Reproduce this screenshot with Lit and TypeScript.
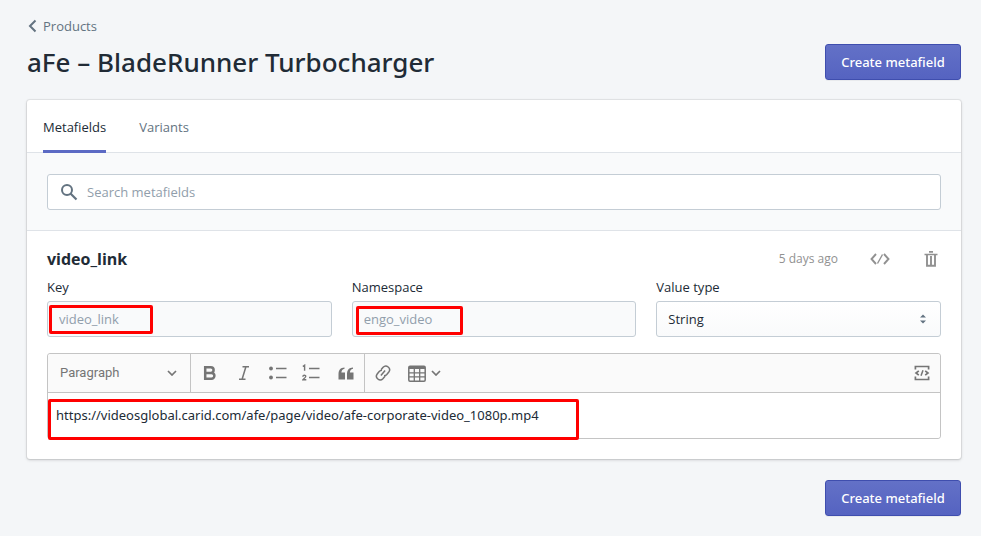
import { LitElement, html, css, svg } from "lit";
import { customElement } from "lit/decorators.js";

const sv = (w: number, h: number, body: unknown) =>
  html`<svg width=${w} height=${h} viewBox="0 0 ${w} ${h}" fill="none" aria-hidden="true">${body}</svg>`;

const icons = {
  back: sv(9, 14, svg`<path d="M7.5 1.5 2 7l5.500 5.500" stroke="#637381" stroke-width="2"/>`),
  search: sv(18, 18, svg`<circle cx="7" cy="7" r="5" stroke="#637381" stroke-width="2"/><path d="m10.500 10.500 6 6" stroke="#637381" stroke-width="2.200"/>`),
  code: sv(20, 14, svg`<path d="M6 2 1.500 7 6 12M14 2l4.500 5L14 12" stroke="#919191" stroke-width="1.900"/><path d="M12.500 2.500 7.500 11.500" stroke="#919191" stroke-width="1.400"/>`),
  trash: sv(14, 16, svg`<path d="M5 .8h4M.5 3.500h13" stroke="#919191" stroke-width="1.700"/><path d="M3 3.500V14.800h8V3.500M7 5v9.500" stroke="#919191" stroke-width="1.900"/>`),
  chevron: sv(10, 6, svg`<path d="m1 1 4 4 4-4" stroke="#757575" stroke-width="1.700"/>`),
  sort: sv(6, 10, svg`<path d="M0 3.500 3 .5l3 3zM0 6.500l3 3 3-3z" fill="#637381"/>`),
  bold: sv(14, 14, svg`<path d="M2.200 1.300h5.600a2.800 2.800 0 0 1 0 5.600H2.200zM2.200 6.900h6.300a2.900 2.900 0 0 1 0 5.800H2.200z" stroke="#757575" stroke-width="2.500"/>`),
  italic: sv(12, 16, svg`<path d="M4.500 1.700H11M1 14.300h6.500M7.900 1.700 4.100 14.300" stroke="#757575" stroke-width="1.500"/>`),
  bullets: sv(18, 14, svg`<circle cx="2" cy="2.500" r="1.900" fill="#757575"/><circle cx="2" cy="11.500" r="1.900" fill="#757575"/><path d="M7 2.500h10.500M7 11.500h10.500" stroke="#757575" stroke-width="1.500"/>`),
  numbers: sv(20, 18, svg`<path d="M.8 2.500 2.600 1.200V6.800M.8 12.700c.2-2 3.100-1.900 2.900-.2-.1 1-1.500 1.900-2.700 3.200h3.300" stroke="#757575" stroke-width="1.400"/><path d="M7 4.500h10.500M7 13.500h10.500" stroke="#757575" stroke-width="1.500"/>`),
  quote: sv(16, 13, svg`<path d="M6.500.5v1.300C4.500 2.200 3.500 3.600 3.400 5.500H7v7H.5V7C.5 3 2.500.7 6.500.5zM15 .5v1.300c-2 .4-3 1.800-3.100 3.700h3.600v7H9V7C9 3 11 .7 15 .5z" fill="#757575"/>`),
  link: sv(16, 18, svg`<path d="M6 5.800 8.100 3.300a3.700 3.700 0 0 1 5.700 4.700l-2 2.500a3.700 3.700 0 0 1-2.800 1.300M10 12.200l-2.100 2.500A3.700 3.700 0 0 1 2.200 10l2-2.500A3.700 3.700 0 0 1 7 6.200M5.900 11.400l4.200-4.900" stroke="#757575" stroke-width="1.500"/>`),
  table: sv(18, 17, svg`<rect x=".8" y="1.300" width="16.400" height="14.900" rx="1.200" stroke="#757575" stroke-width="1.500"/><path d="M1 2.500h16" stroke="#757575" stroke-width="3"/><path d="M1 7.800h16M1 11.800h16M6.300 3v13M11.700 3v13" stroke="#757575" stroke-width="1.300"/>`),
  source: sv(16, 16, svg`<path d="M1.400 4.500V1.500h13.200v3M1.400 11.500v3h13.200v-3" stroke="#757575" stroke-width="1.700"/><path d="M4.800 5.800 2 8l2.800 2.200M11.200 5.800 14 8l-2.800 2.200" stroke="#757575" stroke-width="1.700"/><path d="M9 5.300 7 10.700" stroke="#757575" stroke-width="1.500"/>`),
};

@customElement("app-root")
export class AppRoot extends LitElement {
  static styles = css`
    * { box-sizing: border-box; }
    :host {
      display: block;
      padding: 16px 20px 20px 27px;
      background: #f4f6f8;
      color: #212b36;
      font: 400 13px/20px "Open Sans", "Noto Sans", sans-serif;
    }
    svg { display: block; flex: none; }
    button, input, select, textarea { font: inherit; color: inherit; margin: 0; }
    button { border: 0; background: none; padding: 0; cursor: pointer; }
    .back {
      display: inline-flex; align-items: center; gap: 6px;
      padding-left: 1px; color: #637381; text-decoration: none; vertical-align: top;
    }
    .heading { display: flex; justify-content: space-between; align-items: center; margin-top: 8px; }
    h1 { margin: 0; font-family: "Noto Sans", sans-serif; font-size: 26px; line-height: 36px; font-weight: 500; }
    .primary {
      height: 36px; width: 136px; color: #fff; font-family: "Noto Sans", sans-serif; font-weight: 500;
      border: 1px solid #3f4eae; border-radius: 3px;
      background: linear-gradient(#6371c7, #5563c1);
      box-shadow: 0 1px 0 rgba(22, 29, 37, 0.05);
    }
    .card {
      margin: 20px 0 21px; background: #fff; border-radius: 3px;
      box-shadow: 0 0 0 1px rgba(63, 63, 68, 0.08), 0 1px 3px rgba(63, 63, 68, 0.25);
    }
    .tabs { display: flex; gap: 33px; padding: 0 16px; border-bottom: 1px solid #dfe3e8; }
    .tab { height: 53px; margin-bottom: -1px; color: #637381; border-bottom: 3px solid transparent; padding-top: 3px; }
    .tab.on { color: #212b36; border-color: #5c6ac4; }
    .filter { padding: 21px 20px 20px; background: #f9fafb; border-bottom: 1px solid #dfe3e8; }
    .search {
      display: flex; align-items: center; gap: 9px; height: 36px; padding: 0 12px;
      background: #fff; border: 1px solid #c4cdd5; border-radius: 3px;
    }
    .search input { flex: 1; min-width: 0; border: 0; padding: 0; outline: 0; background: none; }
    .search input::placeholder { color: #919eab; opacity: 1; }
    .entry { padding: 16px 20px 20px; }
    .top { display: flex; align-items: center; height: 24px; }
    h2 { flex: 1; margin: 0; font-size: 16px; line-height: 24px; font-weight: 700; }
    time { font-size: 12px; color: #919191; margin-right: 32px; }
    .top .trash { margin: 0 3px 0 34px; }
    .fields { display: grid; grid-template-columns: repeat(3, 1fr); gap: 20px; margin-top: 6px; }
    label { display: block; margin-bottom: 4px; }
    .box { position: relative; height: 36px; }
    .box input, .box select {
      display: block; width: 100%; height: 36px; padding: 0 11px;
      border: 1px solid #c4cdd5; border-radius: 3px;
    }
    .box input { background: #f9fafb; color: #919eab; }
    .box select { appearance: none; background: linear-gradient(#fff, #f9fafb); }
    .sort { position: absolute; right: 15px; top: 13px; pointer-events: none; }
    .mark {
      position: absolute; border: 3px solid #f00; border-radius: 2px; pointer-events: none;
    }
    .mark.key { left: 2px; top: 4px; width: 104px; height: 29px; }
    .mark.ns { left: 4px; top: 5px; width: 107px; height: 29px; }
    .mark.url { left: 0; top: 6px; width: 531px; height: 41px; }
    .editor { margin-top: 16px; border: 1px solid #c4c4c4; border-radius: 3px; }
    .bar {
      display: flex; height: 39px; background: #fafafa; border-radius: 3px 3px 0 0;
      border-bottom: 1px solid #c4c4c4; color: #757575;
    }
    .style {
      display: flex; justify-content: space-between; align-items: center;
      width: 143px; padding: 0 13px 0 12px; border-right: 1px solid #c4c4c4;
      font-family: Roboto, sans-serif; font-size: 13px; color: #757575;
    }
    .group { display: flex; align-items: center; padding: 0 1px 0 2px; border-right: 1px solid #c4c4c4; }
    .tool { display: flex; justify-content: center; align-items: center; width: 34px; height: 38px; }
    .group.last { flex: 1; border: 0; padding: 0 1px; }
    .tool.wide { width: 48px; gap: 5px; }
    .spacer { flex: 1; }
    .content { position: relative; }
    textarea {
      display: block; width: 100%; height: 45px; padding: 12px 8px; border: 0;
      outline: 0; resize: none; overflow: hidden; border-radius: 3px; background: #fff;
      font-family: "Noto Sans", sans-serif;
    }
    .foot { display: flex; justify-content: flex-end; }
  `;

  private tool(name: string, icon: unknown) {
    return html`<button class="tool" aria-label=${name}>${icon}</button>`;
  }

  render() {
    return html`
      <a class="back" href="#">${icons.back}Products</a>
      <div class="heading">
        <h1>aFe – BladeRunner Turbocharger</h1>
        <button class="primary">Create metafield</button>
      </div>
      <main class="card">
        <div class="tabs" role="tablist">
          <button class="tab on" role="tab" aria-selected="true">Metafields</button>
          <button class="tab" role="tab" aria-selected="false">Variants</button>
        </div>
        <div class="filter">
          <div class="search">
            ${icons.search}
            <input type="search" aria-label="Search metafields" placeholder="Search metafields" />
          </div>
        </div>
        <section class="entry">
          <div class="top">
            <h2>video_link</h2>
            <time>5 days ago</time>
            <button aria-label="Show code">${icons.code}</button>
            <button class="trash" aria-label="Delete">${icons.trash}</button>
          </div>
          <div class="fields">
            <div>
              <label for="key">Key</label>
              <div class="box"><input id="key" value="video_link" disabled /><span class="mark key"></span></div>
            </div>
            <div>
              <label for="ns">Namespace</label>
              <div class="box"><input id="ns" value="engo_video" disabled /><span class="mark ns"></span></div>
            </div>
            <div>
              <label for="type">Value type</label>
              <div class="box">
                <select id="type"><option>String</option></select>
                <span class="sort">${icons.sort}</span>
              </div>
            </div>
          </div>
          <div class="editor">
            <div class="bar" role="toolbar" aria-label="Formatting">
              <button class="style">Paragraph ${icons.chevron}</button>
              <div class="group">
                ${this.tool("Bold", icons.bold)}${this.tool("Italic", icons.italic)}
                ${this.tool("Bulleted list", icons.bullets)}${this.tool("Numbered list", icons.numbers)}
                ${this.tool("Quote", icons.quote)}
              </div>
              <div class="group last">
                ${this.tool("Link", icons.link)}
                <button class="tool wide" aria-label="Table">${icons.table}${icons.chevron}</button>
                <span class="spacer"></span>
                ${this.tool("Source", icons.source)}
              </div>
            </div>
            <div class="content">
              <textarea aria-label="Value" rows="1" .value=${"https://videosglobal.carid.com/afe/page/video/afe-corporate-video_1080p.mp4"}></textarea>
              <span class="mark url"></span>
            </div>
          </div>
        </section>
      </main>
      <div class="foot"><button class="primary">Create metafield</button></div>
    `;
  }
}
